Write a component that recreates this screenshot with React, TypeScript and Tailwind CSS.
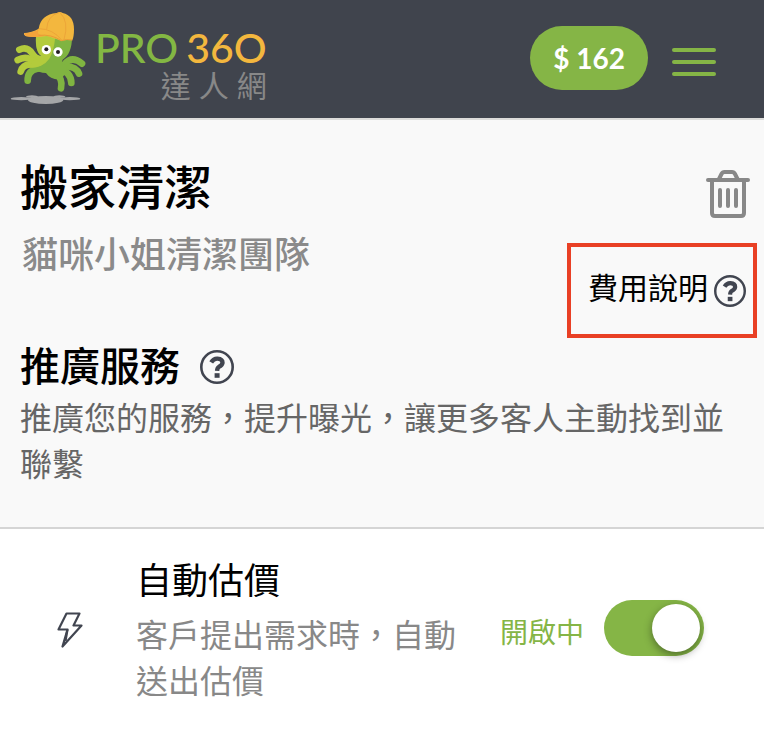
import { useState } from "react";

const cjk = "font-['Noto_Sans_CJK_TC','Noto_Sans_CJK_SC',sans-serif]";

function OctopusLogo() {
  return (
    <svg viewBox="30 33 231 282" className="h-[94px] w-[77px] shrink-0" aria-hidden="true">
      <g fill="#a5a6a8">
        <ellipse cx="137" cy="300" rx="53" ry="12" />
        <ellipse cx="64" cy="296" rx="32" ry="5" />
        <ellipse cx="209" cy="296" rx="32" ry="5" />
        <ellipse cx="96" cy="290" rx="18" ry="4" />
        <ellipse cx="178" cy="290" rx="18" ry="4" />
      </g>
      <g fill="none" stroke="#80b441" strokeLinecap="round" strokeWidth="20">
        <path d="M83 242 Q82 212 112 206 L150 204" />
        <path d="M183 265 Q190 236 164 216" />
        <path d="M214 249 Q214 216 176 206" />
        <path d="M237 221 Q228 196 186 200" />
        <path d="M246 191 Q216 166 194 192 Q184 202 166 200" />
      </g>
      <path
        d="M108 112 C106 140 112 160 124 168 L100 206 Q116 218 138 219 Q152 240 180 238 Q200 226 200 196 Q180 194 188 179 C206 168 216 146 216 112 Z"
        fill="#80b441"
      />
      <g fill="none" stroke="#b3cb3c" strokeLinecap="round" strokeWidth="20">
        <path d="M58 149 Q82 138 96 160 Q106 176 122 178" />
        <path d="M53 180 Q78 166 98 182 Q108 188 124 182" />
        <path d="M62 215 Q68 194 90 193 Q106 194 120 186" />
      </g>
      <path d="M108 108 C106 140 112 160 124 168 Q116 180 96 184 L88 203 Q128 204 148 176 Q162 154 166 108 Z" fill="#b3cb3c" />
      <circle cx="139" cy="149" r="14" fill="#fff" />
      <circle cx="174" cy="156" r="14" fill="#fff" />
      <circle cx="139" cy="148" r="6" fill="#231f20" />
      <circle cx="174" cy="156" r="6" fill="#231f20" />
      <path
        d="M116 86 Q122 44 170 39 Q180 33 188 39 Q222 46 222 88 Q222 110 217 121 Q196 118 184 123 Q158 112 140 108 Q104 114 76 108 Q70 104 72 99 Q96 98 116 86 Z"
        fill="#f3b73e"
      />
      <path d="M72 100 Q100 98 118 88 Q104 104 134 107 Q98 114 76 108 Z" fill="#f3a33b" />
      <g fill="none" stroke="#e89b35" strokeWidth="2">
        <path d="M178 38 Q142 46 140 88" />
        <path d="M180 38 Q208 64 192 119" />
        <path d="M116 86 Q158 86 186 121" />
        <path d="M116 106 Q154 102 184 122 Q198 116 217 120" strokeWidth="3" />
      </g>
    </svg>
  );
}

function HelpIcon({ className }: { className: string }) {
  return (
    <svg viewBox="0 0 34 34" className={className} fill="none" stroke="#414550" aria-hidden="true">
      <circle cx="17" cy="17" r="15.7" strokeWidth="2.6" />
      <path d="M11.2 12.4 Q13.6 8.4 17.4 8.6 Q22.6 9 22.5 12.8 Q22 15.4 19 16.8 Q17.2 17.8 17.1 20.9" strokeWidth="4.4" />
      <path d="M17.1 23.2 V27.8" strokeWidth="5" />
    </svg>
  );
}

function TrashIcon() {
  return (
    <svg viewBox="0 0 44 48" className="h-12 w-11" fill="none" stroke="#888" strokeWidth="4" strokeLinecap="round" aria-hidden="true">
      <path d="M2 10 H42" />
      <path d="M13 9 L15.5 4 Q16.5 2 18.5 2 H26 Q28 2 29 4 L31.5 9" />
      <path d="M6 11 V43 Q6 46 9 46 H35 Q38 46 38 43 V11" />
      <path d="M14 20 V36 M22 20 V36 M30 20 V36" />
    </svg>
  );
}

function BoltIcon() {
  return (
    <svg viewBox="0 0 26 36" className="mt-1 h-9 w-[26px] shrink-0" fill="none" stroke="#414550" strokeWidth="2.2" strokeLinejoin="round" aria-hidden="true">
      <path d="M9.5 1.5 H22.5 L16.5 13.5 H24.5 L5.5 34.5 L10.5 17.5 H1.5 Z" />
      <path d="M10.5 17.5 L8.5 29" />
    </svg>
  );
}

function Header() {
  return (
    <header className="flex h-[120px] items-start justify-between border-b-2 border-[#dcdcda] bg-[#40444d] pr-12 pl-[10px]">
      <a href="#" aria-label="PRO360 達人網" className="flex gap-2 pt-[11px]">
        <OctopusLogo />
        <span className="flex flex-col items-end pt-4">
          <span className="flex gap-2 font-[Lato,sans-serif] text-[41px] leading-[42px] font-medium text-[#83b743]">
            <span>PRO</span>
            <span className="text-[#f3b73e]">36O</span>
          </span>
          <span className="flex gap-2 text-[30px] leading-[30px] text-[#888]">
            <span>達</span>
            <span>人</span>
            <span>網</span>
          </span>
        </span>
      </a>
      <div className="flex items-center gap-6 pt-[26px]">
        <button className="h-16 rounded-full bg-[#85b546] px-[23px] font-[Lato,sans-serif] text-[28px] font-bold text-white">
          $ 162
        </button>
        <button aria-label="選單" className="flex w-11 flex-col gap-2 pt-2">
          <span className="h-1 w-full rounded-sm bg-[#85b546]" />
          <span className="h-1 w-full rounded-sm bg-[#85b546]" />
          <span className="h-1 w-full rounded-sm bg-[#85b546]" />
        </button>
      </div>
    </header>
  );
}

function ServiceSummary() {
  return (
    <section className="border-b-2 border-[#d5d5d5] bg-[#f9f9f9] pb-[42px]">
      <div className="flex items-start justify-between pl-5">
        <div className="pt-8">
          <h1 className="text-5xl leading-[64px] font-medium text-black">搬家清潔</h1>
          <p className="pl-0.5 text-4xl leading-[72px] font-medium text-[#8a8a8a]">貓咪小姐清潔團隊</p>
        </div>
        <div className="flex flex-col items-end gap-[25px] pt-[50px] pr-[7px]">
          <button aria-label="刪除" className="mr-[7px]">
            <TrashIcon />
          </button>
          <button className="flex h-[95px] items-center gap-[6px] border-4 border-[#e94025] pr-[7px] pl-[17px] text-[30px] leading-10 text-black">
            <span className="pb-[10px]">費用說明</span>
            <HelpIcon className="size-8" />
          </button>
        </div>
      </div>
      <div className="px-5">
        <h2 className="flex items-center gap-5 pb-[3px] text-[40px] leading-[52px] font-medium text-black">
          推廣服務
          <button aria-label="說明" className="pt-[5px]">
            <HelpIcon className="size-[34px]" />
          </button>
        </h2>
        <p className="text-[32px] leading-[46px] text-[#666]">推廣您的服務，提升曝光，讓更多客人主動找到並聯繫</p>
      </div>
    </section>
  );
}

function AutoQuote() {
  const [enabled, setEnabled] = useState(true);

  return (
    <section className="flex items-center bg-white pt-[21px] pr-[60px] pb-8 pl-[57px]">
      <BoltIcon />
      <div className="ml-[53px] min-w-0 flex-1 pb-1">
        <h3 className="mb-1 text-4xl leading-[56px] text-black">自動估價</h3>
        <p className="text-[32px] leading-[46px] text-[#888]">客戶提出需求時，自動送出估價</p>
      </div>
      <label className="ml-5 flex shrink-0 cursor-pointer items-center gap-5 text-[28px] leading-10 text-[#85b546]">
        <span className="pt-[6px]">{enabled ? "開啟中" : "已關閉"}</span>
        <input
          type="checkbox"
          role="switch"
          checked={enabled}
          onChange={(e) => setEnabled(e.target.checked)}
          className="peer sr-only"
        />
        <span className="flex h-14 w-[100px] items-center rounded-full bg-gray-300 p-1 peer-checked:justify-end peer-checked:bg-[#85b546]">
          <span className="size-12 rounded-full bg-white shadow-[0_3px_8px_rgba(0,0,0,0.4)]" />
        </span>
      </label>
    </section>
  );
}

export default function App() {
  return (
    <main className={`min-h-screen bg-white ${cjk}`}>
      <Header />
      <ServiceSummary />
      <AutoQuote />
    </main>
  );
}
